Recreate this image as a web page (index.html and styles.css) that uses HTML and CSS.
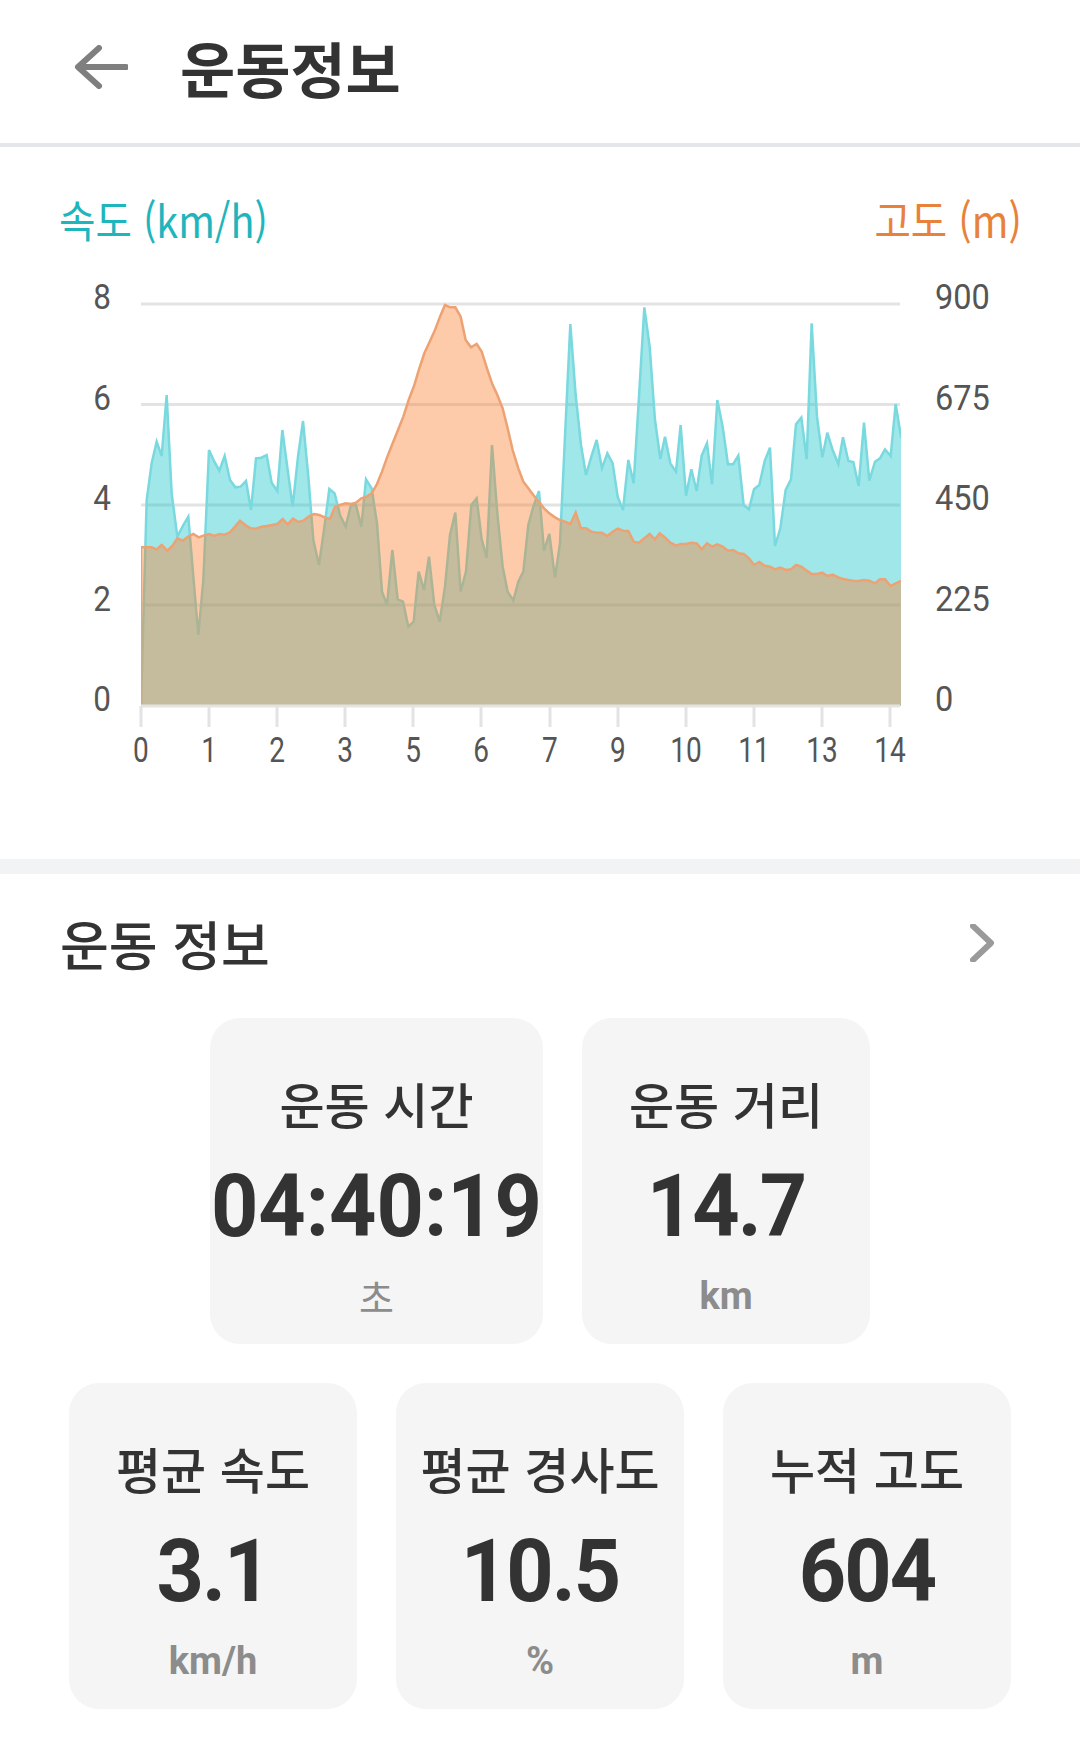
FILE: index.html
```html
<!DOCTYPE html>
<html lang="ko">
<head>
    <meta charset="UTF-8">
    <title>운동정보</title>
    <link rel="stylesheet" href="styles.css">
</head>
<body>

<header class="top-bar">
    <svg class="back-icon" viewBox="0 0 54 44" width="54" height="44">
        <path d="M25 3 L4 22 L25 41 M5 22 H52" fill="none" stroke="#7f7f7f" stroke-width="6" stroke-linecap="round" stroke-linejoin="round"/>
    </svg>
    <h1>운동정보</h1>
</header>

<section class="chart-section">
    <div class="legend">
        <span class="legend-speed">속도 (km/h)</span>
        <span class="legend-alt">고도 (m)</span>
    </div>
    <svg class="chart" viewBox="0 270 1080 510" width="1080" height="510">
        <defs>
            <clipPath id="plotArea"><rect x="63" y="60" width="2280" height="1218"/></clipPath>
        </defs>

        <g class="grid">
            <line x1="141" y1="304" x2="900" y2="304"/>
            <line x1="141" y1="404.5" x2="900" y2="404.5"/>
            <line x1="141" y1="505" x2="900" y2="505"/>
            <line x1="141" y1="605" x2="900" y2="605"/>
        </g>

        <g transform="translate(120 280) scale(0.33333)" clip-path="url(#plotArea)">
            <!-- 속도 -->
            <polyline class="series-speed" points="63,1400 63,1278 80,660 95,550 110,485 125,528 140,345 155,640 172,770 190,735 205,710 220,890 235,1065 250,900 267,510 283,545 298,572 314,528 330,600 346,622 362,620 378,603 393,690 408,535 424,533 440,525 455,608 472,633 487,450 503,570 518,680 534,530 549,423 565,590 580,780 597,855 612,750 628,627 644,640 660,705 677,740 693,675 708,675 724,740 738,598 755,625 771,730 786,935 801,975 817,810 833,958 849,965 865,1040 881,1025 896,875 912,930 927,830 943,975 959,1025 975,920 990,765 1006,698 1022,935 1038,875 1054,675 1070,655 1085,778 1100,833 1116,495 1132,700 1148,860 1163,935 1180,962 1195,905 1210,875 1225,735 1240,680 1257,633 1272,812 1288,762 1305,893 1320,790 1335,470 1351,132 1367,345 1383,495 1398,585 1414,530 1430,480 1446,565 1462,520 1478,550 1493,650 1509,690 1525,540 1541,610 1557,350 1573,82 1589,200 1605,420 1621,537 1635,470 1651,550 1668,575 1682,435 1698,647 1714,568 1730,633 1745,527 1761,490 1776,613 1792,360 1808,440 1824,553 1840,552 1855,527 1871,675 1887,688 1902,628 1918,615 1934,543 1950,503 1965,798 1981,745 1997,630 2013,598 2028,433 2044,413 2060,537 2075,130 2091,410 2107,532 2122,458 2138,510 2155,552 2169,472 2185,543 2200,546 2216,618 2232,428 2248,602 2265,545 2280,535 2295,508 2312,528 2327,372 2343,470 2400,470 2400,1400"/>
            <!-- 고도 -->
            <polyline class="series-alt" points="63,1400 63,802 80,802 95,802 110,808 125,795 142,812 157,798 172,775 188,782 205,770 220,762 236,772 252,766 267,762 283,768 298,762 314,764 330,757 345,740 360,722 376,735 392,745 408,746 424,740 440,738 456,735 472,732 488,717 503,733 519,716 535,726 550,722 566,710 582,702 598,705 614,712 630,717 645,680 660,675 677,670 693,672 708,668 724,655 740,650 755,640 771,612 786,575 802,530 818,490 834,450 850,410 866,360 882,318 897,268 913,220 929,185 945,150 960,110 975,75 990,82 1006,82 1022,110 1037,180 1053,202 1070,192 1085,215 1100,262 1116,310 1132,345 1148,385 1163,445 1178,510 1195,565 1210,605 1225,625 1240,645 1257,665 1272,685 1288,700 1305,712 1320,720 1335,725 1351,732 1367,698 1383,745 1398,745 1414,755 1430,758 1446,758 1462,768 1478,755 1493,746 1509,752 1525,753 1541,785 1557,788 1573,775 1589,762 1605,778 1619,760 1635,772 1651,788 1668,797 1682,792 1698,792 1714,788 1730,790 1745,808 1761,790 1776,800 1792,793 1808,800 1824,812 1840,810 1855,820 1871,822 1887,835 1902,855 1918,846 1934,857 1950,860 1965,868 1981,863 1997,870 2013,868 2028,855 2044,860 2060,872 2075,882 2091,882 2107,878 2122,888 2138,884 2155,892 2169,897 2185,900 2200,902 2216,903 2232,900 2248,902 2265,910 2280,898 2295,898 2312,918 2327,910 2343,903 2400,903 2400,1400"/>
        </g>

        <g class="grid">
            <line x1="141" y1="706" x2="900" y2="706"/>
            <line x1="141" y1="706" x2="141" y2="727"/>
            <line x1="209" y1="706" x2="209" y2="727"/>
            <line x1="277" y1="706" x2="277" y2="727"/>
            <line x1="345" y1="706" x2="345" y2="727"/>
            <line x1="413" y1="706" x2="413" y2="727"/>
            <line x1="481" y1="706" x2="481" y2="727"/>
            <line x1="550" y1="706" x2="550" y2="727"/>
            <line x1="618" y1="706" x2="618" y2="727"/>
            <line x1="686" y1="706" x2="686" y2="727"/>
            <line x1="754" y1="706" x2="754" y2="727"/>
            <line x1="822" y1="706" x2="822" y2="727"/>
            <line x1="890" y1="706" x2="890" y2="727"/>
        </g>

        <g class="axis-left">
            <text x="102" y="309">8</text>
            <text x="102" y="410">6</text>
            <text x="102" y="510">4</text>
            <text x="102" y="611">2</text>
            <text x="102" y="711">0</text>
        </g>
        <g class="axis-right">
            <text x="935" y="309">900</text>
            <text x="935" y="410">675</text>
            <text x="935" y="510">450</text>
            <text x="935" y="611">225</text>
            <text x="935" y="711">0</text>
        </g>
        <g class="axis-bottom">
            <text x="141" y="762">0</text>
            <text x="209" y="762">1</text>
            <text x="277" y="762">2</text>
            <text x="345" y="762">3</text>
            <text x="413" y="762">5</text>
            <text x="481" y="762">6</text>
            <text x="550" y="762">7</text>
            <text x="618" y="762">9</text>
            <text x="686" y="762">10</text>
            <text x="754" y="762">11</text>
            <text x="822" y="762">13</text>
            <text x="890" y="762">14</text>
        </g>
    </svg>
</section>

<section class="info-section">
    <div class="info-header">
        <h2>운동 정보</h2>
        <svg class="chevron" viewBox="0 0 24 38" width="24" height="38">
            <path d="M3 2 L21 19 L3 36" fill="none" stroke="#9a9a9a" stroke-width="6" stroke-linecap="round" stroke-linejoin="round"/>
        </svg>
    </div>

    <div class="cards">
        <div class="card card-wide">
            <div class="card-label">운동 시간</div>
            <div class="card-value">04:40:19</div>
            <div class="card-unit card-unit-ko">초</div>
        </div>
        <div class="card">
            <div class="card-label">운동 거리</div>
            <div class="card-value">14.7</div>
            <div class="card-unit">km</div>
        </div>
        <div class="card">
            <div class="card-label">평균 속도</div>
            <div class="card-value">3.1</div>
            <div class="card-unit">km/h</div>
        </div>
        <div class="card">
            <div class="card-label">평균 경사도</div>
            <div class="card-value">10.5</div>
            <div class="card-unit">%</div>
        </div>
        <div class="card">
            <div class="card-label">누적 고도</div>
            <div class="card-value">604</div>
            <div class="card-unit">m</div>
        </div>
    </div>
</section>

</body>
</html>
```

FILE: styles.css
```css
body {
    font-family: Roboto, "Noto Sans CJK KR", sans-serif;
    margin: 0;
    padding: 0;
    background-color: #fff;
    color: #333;
}
.top-bar {
    box-sizing: border-box;
    height: 147px;
    display: flex;
    align-items: center;
    padding: 0 0 10px 74px;
    border-bottom: 4px solid #e4e6ea;
}
.back-icon {
    margin-right: 52px;
}
h1 {
    margin: 0;
    font-family: "Noto Sans CJK KR", sans-serif;
    font-size: 60px;
    font-weight: 700;
    line-height: 60px;
    color: #333;
}
.chart-section {
    height: 712px;
    border-bottom: 15px solid #f2f3f5;
}
.legend {
    height: 123px;
    padding: 0 58px 0 59px;
    display: flex;
    justify-content: space-between;
    align-items: center;
    font-family: "Noto Sans CJK KR", sans-serif;
    font-size: 44px;
    line-height: 50px;
}
.legend span {
    display: inline-block;
    position: relative;
    top: 10px;
}
.legend-speed {
    color: #1fb5bd;
    transform: scaleX(0.9);
    transform-origin: left center;
}
.legend-alt {
    color: #e8823a;
    transform: scaleX(0.9);
    transform-origin: right center;
}
.chart {
    display: block;
}
.grid line {
    stroke: #e3e3e3;
    stroke-width: 3;
}
.series-speed {
    fill: rgba(17, 195, 202, 0.4);
    stroke: #79d9de;
    stroke-width: 2.5;
    vector-effect: non-scaling-stroke;
}
.series-alt {
    fill: rgba(250, 125, 42, 0.4);
    stroke: #eda273;
    stroke-width: 2.5;
    vector-effect: non-scaling-stroke;
}
.chart text {
    font-family: Roboto, sans-serif;
    font-size: 35px;
    fill: #555;
    transform-box: fill-box;
}
.axis-left text {
    transform-origin: center;
    text-anchor: middle;
    transform: scaleX(0.9);
}
.axis-right text {
    transform-origin: left center;
    transform: scaleX(0.93);
}
.axis-bottom text {
    text-anchor: middle;
    transform-origin: center;
    transform: scaleX(0.8);
}
.info-section {
    padding: 0 69px;
}
.info-header {
    height: 144px;
    margin: 0 -9px;
    padding: 0 26px 6px 0;
    box-sizing: border-box;
    display: flex;
    justify-content: space-between;
    align-items: center;
}
h2 {
    margin: 0;
    font-family: "Noto Sans CJK KR", sans-serif;
    font-size: 53px;
    font-weight: 500;
    color: #333;
    line-height: 60px;
}
.cards {
    display: flex;
    flex-wrap: wrap;
    justify-content: center;
    gap: 39px;
}
.card {
    box-sizing: border-box;
    width: 288px;
    height: 326px;
    padding-top: 55px;
    background-color: #f5f5f5;
    border-radius: 30px;
    text-align: center;
}
.card-wide {
    width: 333px;
}
.card-label {
    font-family: "Noto Sans CJK KR", sans-serif;
    font-size: 49px;
    font-weight: 500;
    line-height: 60px;
    color: #333;
    white-space: nowrap;
}
.card-value {
    margin: 23px -20px 0;
    font-size: 87px;
    font-weight: 700;
    line-height: 100px;
    letter-spacing: -2px;
    color: #333;
    transform: scaleX(0.95);
}
.card-wide .card-value {
    letter-spacing: 0;
}
.card-unit {
    margin-top: 17px;
    font-size: 38px;
    font-weight: 700;
    line-height: 46px;
    color: #8c8c8c;
}
.card-unit-ko {
    font-family: "Noto Sans CJK KR", sans-serif;
    font-weight: 400;
}
```
